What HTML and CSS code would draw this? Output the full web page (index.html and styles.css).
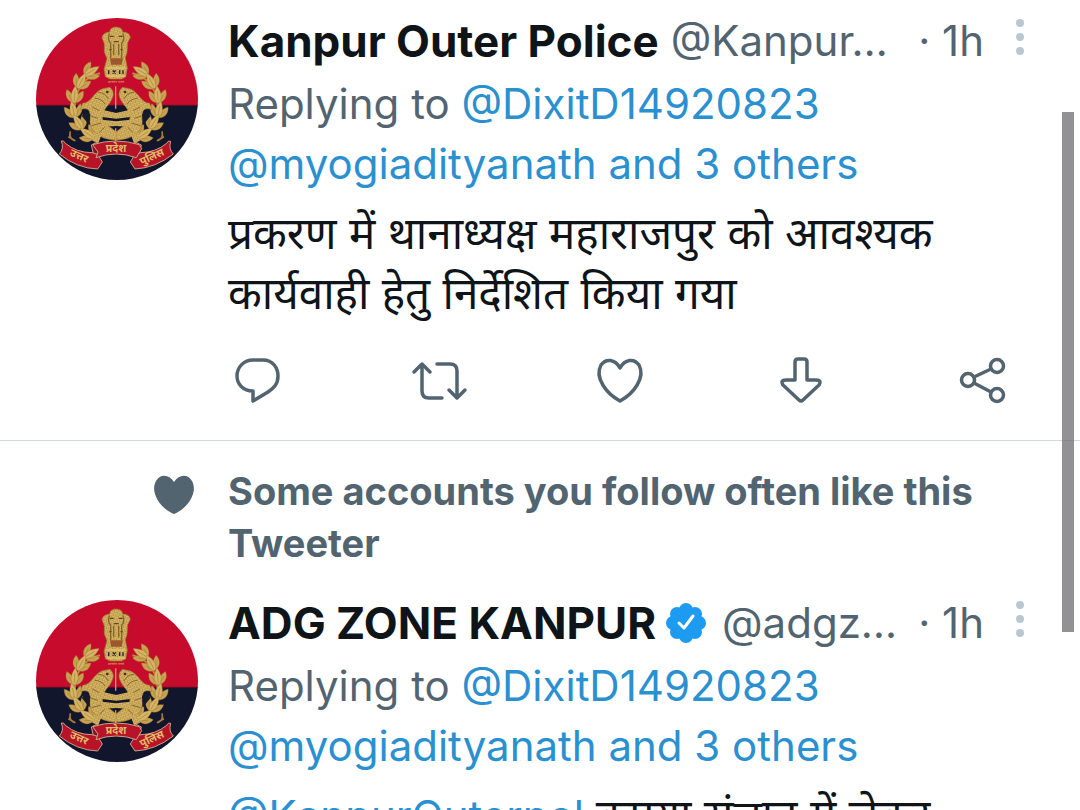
FILE: index.html
```
<!DOCTYPE html>
<html lang="en">
<head>
    <meta charset="UTF-8">
    <meta name="viewport" content="width=device-width, initial-scale=1.0">
    <title>Timeline</title>
    <link rel="stylesheet" href="styles.css">
</head>
<body>
    <svg class="sprite" aria-hidden="true">
        <defs>
            <pattern id="thread" width="9" height="9" patternUnits="userSpaceOnUse" patternTransform="rotate(28)">
                <rect width="9" height="9" fill="#c8a34f"/>
                <path d="M0 2H5M4 7H9" stroke="#dec275" stroke-width="3"/>
                <path d="M6 3H9M0 7H3" stroke="#9c7834" stroke-width="2"/>
            </pattern>
            <g id="leaf" fill="#c8a34f" stroke="#a17a35" stroke-width="1">
                <path d="M-2 24C-22 20-30 4-25-14C-9-7 0 8-2 24Z"/>
                <path d="M2 24C22 20 30 4 25-14C9-7 0 8 2 24Z"/>
                <path d="M0 25C-15 14-13-6 0-28C13-6 15 14 0 25Z" fill="#d5b564"/>
                <path d="M0 18V-12M-8 15L-17 0M8 15L17 0" stroke="#a98340" stroke-width="2"/>
            </g>
            <g id="half-crest">
                <path d="M210 190C125 208 104 330 186 388" fill="none" stroke="#b38b42" stroke-width="6"/>
                <use href="#leaf" transform="translate(184 184) rotate(58)"/>
                <use href="#leaf" transform="translate(154 214) rotate(28)"/>
                <use href="#leaf" transform="translate(134 255) rotate(5)"/>
                <use href="#leaf" transform="translate(130 300) rotate(-12)"/>
                <use href="#leaf" transform="translate(145 337) rotate(-32)"/>
                <use href="#leaf" transform="translate(173 371) rotate(-55)"/>
                <path d="M240 232C250 242 253 254 246 266C238 286 226 288 218 313C214 334 224 347 240 351L259 366V390C222 390 188 373 181 345C176 314 190 290 151 298L158 280C184 279 190 246 218 236Z" fill="url(#thread)" stroke="#a17a35" stroke-width="2"/>
                <path d="M205 247Q225 247 235 267M194 265Q214 265 225 282M187 291L207 302M182 318L204 325M185 347L213 339M208 367L224 352" fill="none" stroke="#8a6930" stroke-width="3"/>
                <path d="M163 299L181 313L178 346L156 319Z" fill="#151a2d"/>
                <path d="M216 299L259 309V326L216 321ZM216 329L259 334V348L218 350Z" fill="url(#thread)"/>
                <path d="M191 367L213 378L205 400L187 392Z" fill="url(#thread)"/>
                <circle cx="232" cy="246" r="4" fill="#4f2a19"/>
            </g>
            <symbol id="crest" viewBox="18 24 486 486">
                <path fill="#c60b2d" d="M18 24H504V286H18Z"/>
                <path fill="#11162c" d="M18 285H504V510H18Z"/>
                <path d="M18 286H504" stroke="#621027" stroke-width="3"/>
                <use href="#half-crest"/>
                <use href="#half-crest" transform="translate(517 0) scale(-1 1)"/>
                <path d="M257 229V296M257 355V393" stroke="#c8a34f" stroke-width="4"/>
                <path d="M239 66Q239 52 258 51Q278 52 278 66Q298 66 301 82L293 98L291 128L286 143L292 174L287 201L274 207H240L226 200L222 177L231 146L223 126V101L216 83Q218 68 239 66Z" fill="url(#thread)" stroke="#a17a35" stroke-width="2"/>
                <path d="M238 70Q232 91 242 100V145M279 70Q285 91 275 100V145M251 101V136M266 101V136" stroke="#87652b" fill="none" stroke-width="4"/>
                <path d="M239 79H251M266 79H278M251 95H266M238 119H244M272 119H278" stroke="#62451f" stroke-width="4"/>
                <path d="M240 145H279L275 164H243Z" fill="#9e572c"/>
                <path d="M230 174H286M230 198H286" stroke="#e1c36e" stroke-width="5"/>
                <path d="M236 181V192M248 181L257 191M257 181L248 191M269 181V192M279 181V192" stroke="#242334" stroke-width="4"/>
                <text class="motto" x="258" y="220">सत्यमेव जयते</text>
                <g fill="#b71427" stroke="#c9a18a" stroke-width="3">
                    <path d="M184 405L200 397L214 420L204 443L190 431Z" fill="#861326"/>
                    <path d="M334 405L318 397L304 420L313 443L328 431Z" fill="#861326"/>
                    <path d="M94 393Q101 390 106 400Q140 428 186 428L203 433L217 456L203 477Q141 475 88 432Q103 416 94 393Z"/>
                    <path d="M422 394Q415 390 410 400Q377 427 333 428L315 433L301 456L315 477Q376 474 430 432Q415 417 422 394Z"/>
                    <path d="M188 404Q257 382 328 404L335 416L319 443Q258 421 198 443L204 426Z"/>
                </g>
                <text class="ribbon" transform="translate(143 447) rotate(24)">उत्तर</text>
                <text class="ribbon" x="258" y="427">प्रदेश</text>
                <text class="ribbon" transform="translate(370 450) rotate(-25)">पुलिस</text>
                <path d="M121 364Q116 384 130 390T115 380M396 364Q401 384 387 390T402 380" fill="none" stroke="#a97c36" stroke-width="5"/>
            </symbol>
            <symbol id="verified" viewBox="0 0 40 40">
                <g fill="#1d9bf0">
                    <circle cx="20" cy="20" r="16"/>
                    <circle cx="20" cy="7" r="7"/><circle cx="29" cy="11" r="7"/>
                    <circle cx="33" cy="20" r="7"/><circle cx="29" cy="29" r="7"/>
                    <circle cx="20" cy="33" r="7"/><circle cx="11" cy="29" r="7"/>
                    <circle cx="7" cy="20" r="7"/><circle cx="11" cy="11" r="7"/>
                </g>
                <path d="M13 20L18 25L27 13" fill="none" stroke="#fff" stroke-width="3" stroke-linecap="round" stroke-linejoin="round"/>
            </symbol>
        </defs>
    </svg>

    <main class="timeline">
        <article class="tweet">
            <svg class="avatar" role="img" aria-label="Kanpur Outer Police"><use href="#crest"/></svg>
            <div class="content">
                <header class="tweet-header">
                    <h2 class="name">Kanpur Outer Police</h2>
                    <span class="handle">@Kanpur…</span>
                    <span class="time">· 1h</span>
                    <button class="more" aria-label="More options"><svg width="10" height="38" viewBox="0 0 10 38"><circle cx="5" cy="5" r="4"/><circle cx="5" cy="19" r="4"/><circle cx="5" cy="33" r="4"/></svg></button>
                </header>
                <p class="replying">Replying to <a href="#">@DixitD14920823</a> <a href="#">@myogiadityanath and 3 others</a></p>
                <p class="text" lang="hi">प्रकरण में थानाध्यक्ष महाराजपुर को आवश्यक कार्यवाही हेतु निर्देशित किया गया</p>
                <div class="actions">
                    <button aria-label="Reply"><svg viewBox="0 0 60 60"><path d="M25 10H35C45 10 50 18 50 26C50 34 46 38 40 42L25 51V41C15 41 9 34 9 26C9 17 16 10 25 10Z"/></svg></button>
                    <button aria-label="Retweet"><svg viewBox="0 0 60 60"><path d="M5 22L13 14L21 22M13 14V41Q13 48 20 48H33M28 14H41Q48 14 48 21V48M40 40L48 48L56 40"/></svg></button>
                    <button aria-label="Like"><svg viewBox="0 0 60 60"><path d="M30 18C25 9 16 8 11 15C4 28 17 44 30 51C43 44 56 28 49 15C44 8 35 9 30 18Z"/></svg></button>
                    <button aria-label="Download"><svg viewBox="0 0 60 60"><path d="M27 9H33Q36 9 36 12V30H45Q51 30 48 35L32 50Q30 52 28 50L12 35Q9 30 15 30H24V12Q24 9 27 9Z"/></svg></button>
                    <button aria-label="Share"><svg viewBox="0 0 60 60"><circle cx="16" cy="30" r="6.5"/><circle cx="45" cy="16" r="6.5"/><circle cx="45" cy="45" r="6.5"/><path d="M22 27L39 19M22 33L39 42"/></svg></button>
                </div>
            </div>
        </article>

        <article class="tweet tweet-suggested">
            <svg class="context-icon" viewBox="0 0 42 40" aria-hidden="true"><path d="M21 7C16-1 7-1 3 6C-4 19 10 35 21 39C32 35 46 19 39 6C35-1 26-1 21 7Z"/></svg>
            <p class="context">Some accounts you follow often like this Tweeter</p>
            <svg class="avatar" role="img" aria-label="ADG Zone Kanpur"><use href="#crest"/></svg>
            <div class="content">
                <header class="tweet-header">
                    <h2 class="name">ADG ZONE KANPUR</h2>
                    <svg class="verified" role="img" aria-label="Verified account"><use href="#verified"/></svg>
                    <span class="handle">@adgz…</span>
                    <span class="time">· 1h</span>
                    <button class="more" aria-label="More options"><svg width="10" height="38" viewBox="0 0 10 38"><circle cx="5" cy="5" r="4"/><circle cx="5" cy="19" r="4"/><circle cx="5" cy="33" r="4"/></svg></button>
                </header>
                <p class="replying">Replying to <a href="#">@DixitD14920823</a> <a href="#">@myogiadityanath and 3 others</a></p>
                <p class="text"><a href="#">@KanpurOuterpol</a> <span lang="hi">कृपया संज्ञान में लेकर</span></p>
            </div>
        </article>
        <div class="scroll-thumb"></div>
    </main>
</body>
</html>
```
FILE: styles.css
```
* {
    box-sizing: border-box;
}

body {
    margin: 0;
    background-color: #fff;
    color: #0f1419;
    font-family: Inter, "Noto Sans", "Noto Sans Devanagari", sans-serif;
    font-size: 42px;
    line-height: 60px;
}

h2,
p {
    margin: 0;
}

a {
    color: #2b90d0;
    text-decoration: none;
}

button {
    padding: 0;
    border: none;
    background: none;
    color: #536471;
    cursor: pointer;
}

.sprite {
    position: absolute;
    width: 0;
    height: 0;
}

.timeline {
    position: relative;
    height: 100vh;
    overflow: hidden;
}

.tweet {
    display: grid;
    grid-template-columns: 162px minmax(0, 1fr);
    column-gap: 30px;
    padding: 11px 48px 30px 36px;
    border-bottom: 1px solid #cfd9de;
}

.avatar {
    width: 162px;
    height: 162px;
    margin-top: 7px;
    border-radius: 50%;
}

.motto,
.ribbon {
    fill: #dfbd68;
    font-family: "Noto Sans", sans-serif;
    font-size: 10px;
    text-anchor: middle;
}

.ribbon {
    font-size: 32px;
    font-weight: bold;
}

.tweet-header {
    display: flex;
    align-items: center;
    height: 60px;
    white-space: nowrap;
}

.name {
    font-size: 44px;
    font-weight: 700;
}

.verified {
    width: 40px;
    height: 40px;
    margin: 0 4px 0 10px;
}

.handle {
    margin-left: 12px;
    color: #536471;
}

.time {
    margin-left: auto;
    color: #536471;
}

.more {
    align-self: flex-start;
    width: 24px;
    height: 52px;
    margin-left: 24px;
    fill: #b9c8d0;
}

.more svg {
    display: block;
    margin: auto;
}

.replying {
    margin-top: 3px;
    color: #536471;
}

.text {
    margin-top: 9px;
}

.text:lang(hi),
.text [lang="hi"] {
    font-size: 44px;
}

.actions {
    display: flex;
    justify-content: space-between;
    margin: 27px 20px 0 0;
}

.actions button {
    width: 60px;
    height: 60px;
}

.actions svg {
    display: block;
    fill: none;
    stroke: currentColor;
    stroke-width: 3.5;
    stroke-linecap: round;
    stroke-linejoin: round;
}

.tweet-suggested {
    padding-top: 24px;
}

.context-icon {
    width: 42px;
    height: 40px;
    margin: 10px 3px 0 0;
    justify-self: end;
    fill: #536471;
}

.context {
    padding-bottom: 24px;
    color: #536471;
    font-size: 38px;
    font-weight: 700;
    line-height: 52px;
}

.scroll-thumb {
    position: absolute;
    top: 112px;
    right: 6px;
    width: 12px;
    height: 520px;
    background-color: rgba(100, 100, 104, 0.7);
}
```
